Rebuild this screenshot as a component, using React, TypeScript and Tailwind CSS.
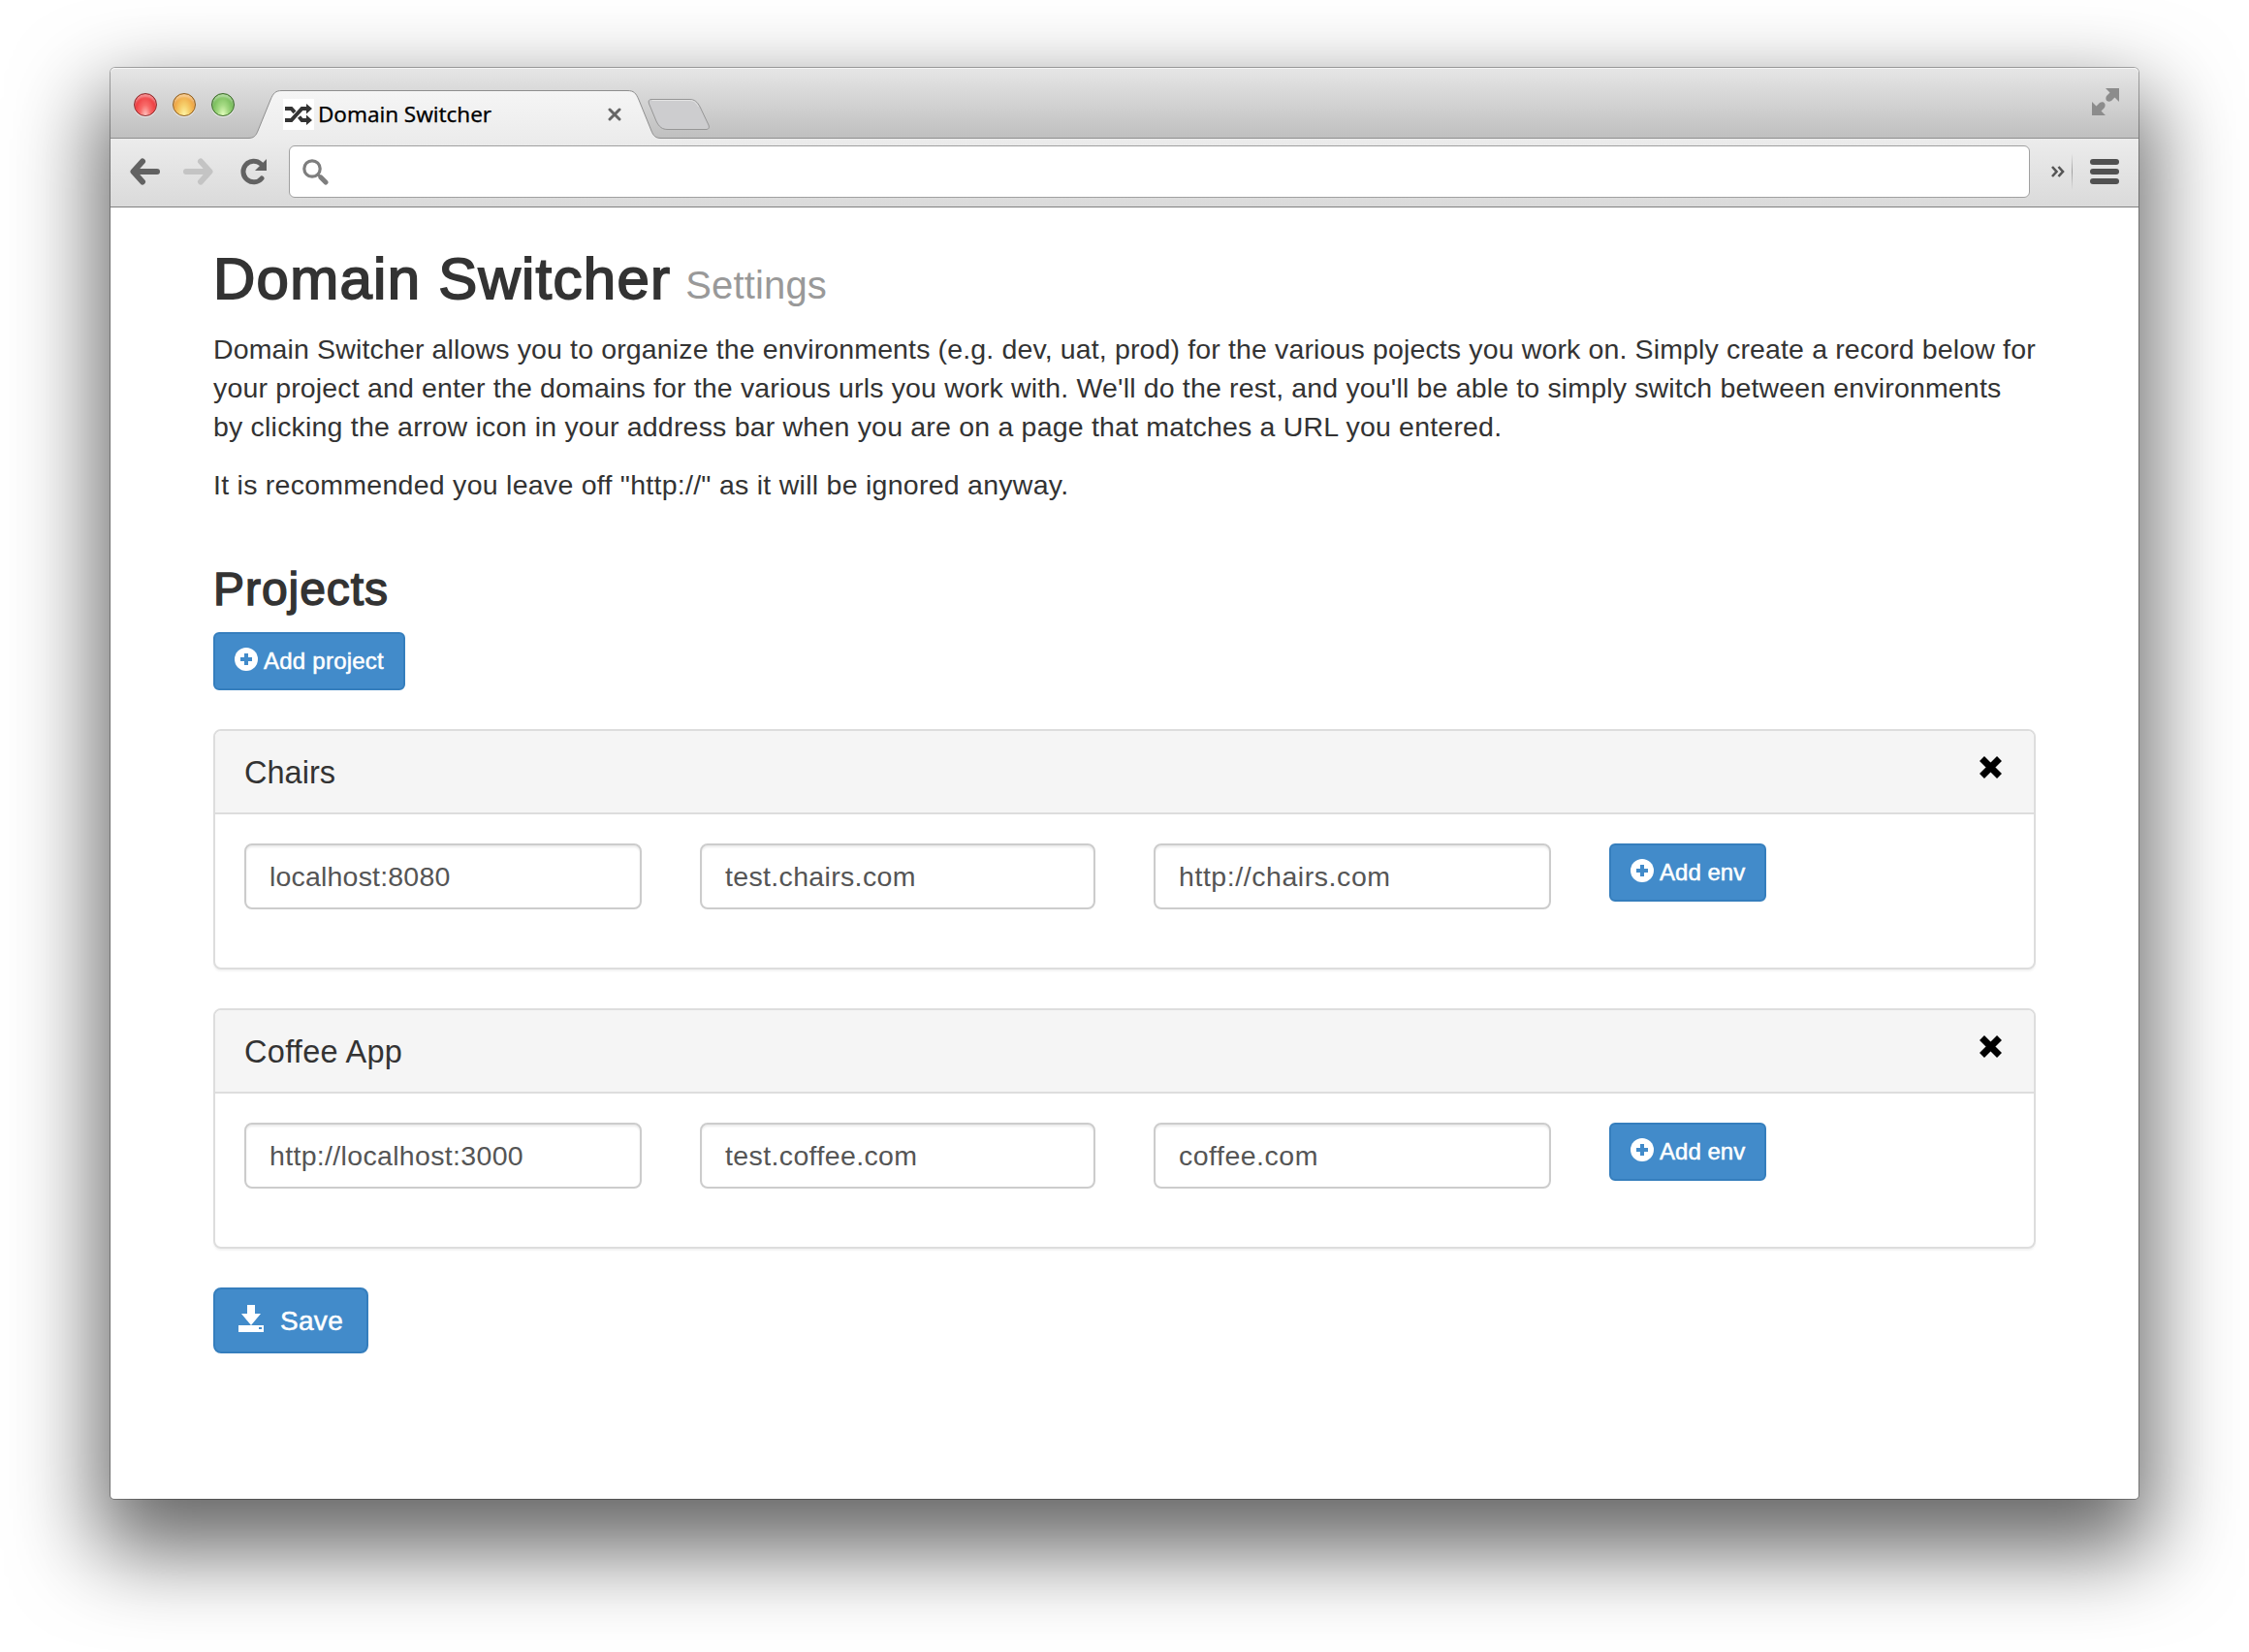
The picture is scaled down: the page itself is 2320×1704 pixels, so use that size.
const light = "size-6 rounded-full border-[1.5px]";

function TabStrip() {
  return (
    <div className="relative flex h-[73px] items-start rounded-t-[5px] bg-linear-to-b from-[#e6e6e6] to-[#bfbfbf] shadow-[inset_0_1px_0_#f4f4f4]">
      <div className="ml-6 mt-[26px] flex gap-4">
        <span className={light + " border-[#8e2f30] bg-[radial-gradient(ellipse_at_50%_100%,#ffc4c0_0%,#f86a68_35%,#ee3c40_70%,#b9151b_100%)] shadow-[inset_0_3px_2px_rgba(255,255,255,.4),0_1px_0_#eee]"} />
        <span className={light + " border-[#8f5f20] bg-[radial-gradient(ellipse_at_50%_100%,#fff6a8_0%,#f6cf6b_35%,#efa544_70%,#b46a10_100%)] shadow-[inset_0_3px_2px_rgba(255,255,255,.4),0_1px_0_#eee]"} />
        <span className={light + " border-[#3c6b28] bg-[radial-gradient(ellipse_at_50%_100%,#e6ffc0_0%,#a5da83_35%,#78bd5b_70%,#37791f_100%)] shadow-[inset_0_3px_2px_rgba(255,255,255,.4),0_1px_0_#eee]"} />
      </div>
      <svg className="absolute left-0 top-0" width="2092" height="74" viewBox="0 0 2092 74" fill="none">
        <defs>
          <linearGradient id="tab" x1="0" y1="24" x2="0" y2="74" gradientUnits="userSpaceOnUse">
            <stop stopColor="#f5f5f5" />
            <stop offset="1" stopColor="#ececec" />
          </linearGradient>
        </defs>
        <path d="M0 72.5H142C148 72.5 150 70 152 65L165 33C168 26 170 23.500 177 23.500H533C540 23.500 542 26 545 33L558 65C560 70 562 72.500 568 72.500H2092V74H0Z" fill="url(#tab)" />
        <path d="M0 72.5H142C148 72.5 150 70 152 65L165 33C168 26 170 23.500 177 23.500H533C540 23.500 542 26 545 33L558 65C560 70 562 72.500 568 72.500H2092" stroke="#8e8e8e" />
        <path d="M558 32.500H597C603 32.500 605 35 608 40L617 59C618 62 617 63.500 614 63.500H575C569 63.500 566 61 563 55L555.500 37C554.500 34 555.500 32.500 558 32.500Z" fill="#cdcdcf" stroke="#969696" />
        <path d="M558.500 33.500H597C602 33.500 604 36 606.500 40" stroke="#e4e4e4" />
      </svg>
      <div className="relative ml-[50px] mt-[32px] flex items-center">
        <span className="flex size-8 items-center justify-center bg-white">
          <svg width="28" height="22" viewBox="0 0 28 22" fill="none" stroke="#333" strokeWidth="4">
            <path d="M0 17H6.500L17.500 5H23" />
            <path d="M0 5H6.500L10 8.800M14.500 13.500L17.500 17H23" />
            <path d="M22 0L28 5L22 10.500ZM22 11.500L28 17L22 22Z" fill="#333" stroke="none" />
          </svg>
        </span>
        <span className="ml-1 whitespace-nowrap font-['Noto_Sans'] text-[22.500px] leading-8 tracking-[-0.06px] text-black [-webkit-text-stroke:0.250px_black]">Domain Switcher</span>
      </div>
      <svg className="absolute left-[513px] top-[41px]" width="14" height="14" viewBox="0 0 14 14" stroke="#666" strokeWidth="3" strokeLinecap="round">
        <path d="M2 2L12 12M12 2L2 12" />
      </svg>
      <svg className="ml-auto mr-[20px] mt-[21px]" width="28" height="28" viewBox="0 0 28 28" fill="#8c8c8c">
        <path d="M14 0H28V14L23.500 9.500L20 13C16 15 13 12 15 8L18.500 4.500Z" />
        <path d="M14 28H0V14L4.500 18.500L8 15C12 13 15 16 13 20L9.500 23.500Z" />
      </svg>
    </div>
  );
}

function Toolbar() {
  return (
    <div className="flex h-[71px] items-center border-b border-[#808080] bg-linear-to-b from-[#ececec] to-[#dadada] pb-[2px]">
      <svg className="ml-5" width="31" height="28" viewBox="0 0 31 28" fill="none" stroke="#626262" strokeWidth="6" strokeLinecap="round" strokeLinejoin="round">
        <path d="M28 14H5M13 3.500L3.500 14L13 24.500" />
      </svg>
      <svg className="ml-6" width="31" height="28" viewBox="0 0 31 28" fill="none" stroke="#c4c4c4" strokeWidth="6" strokeLinecap="round" strokeLinejoin="round">
        <path d="M3 14H26M18 3.500L27.500 14L18 24.500" />
      </svg>
      <svg className="ml-7" width="28" height="28" viewBox="0 0 28 28" fill="none">
        <path d="M22 21A10.800 10.800 0 1 1 21 6" stroke="#626262" strokeWidth="5" strokeLinecap="round" />
        <path d="M27 1V13H15Z" fill="#626262" />
      </svg>
      <div className="ml-[22px] flex h-[54px] w-[1796px] items-center rounded-[6px] border border-[#a0a0a0] bg-white pl-[13px]">
        <svg width="27" height="27" viewBox="0 0 27 27" fill="none" stroke="#7e7e7e" strokeLinecap="round">
          <circle cx="10" cy="10" r="8.200" strokeWidth="3.200" />
          <path d="M16 16L19 19" strokeWidth="3" />
          <path d="M19 19L24 24" strokeWidth="5" />
        </svg>
      </div>
      <svg className="ml-[22px]" width="14" height="12" viewBox="0 0 14 12" fill="none" stroke="#555" strokeWidth="2.600">
        <path d="M1 1L5.500 6L1 11M7.500 1L12 6L7.500 11" />
      </svg>
      <span className="ml-[7px] h-[38px] w-px bg-linear-to-b from-transparent via-[#a0a0a0] to-transparent" />
      <div className="ml-[18px] flex w-[30px] flex-col gap-1">
        <span className="h-1.5 rounded-full bg-[#505050]" />
        <span className="h-1.5 rounded-full bg-[#505050]" />
        <span className="h-1.5 rounded-full bg-[#505050]" />
      </div>
    </div>
  );
}

function PlusCircle() {
  return (
    <svg className="mt-[-4px]" width="24" height="24" viewBox="0 0 24 24">
      <circle cx="12" cy="12" r="12" fill="#fff" />
      <path d="M10 6H14V10H18V14H14V18H10V14H6V10H10Z" fill="#428bca" />
    </svg>
  );
}

function AddButton({ label, look }: { label: string; look: string }) {
  return (
    <button className={"flex h-[60px] items-center gap-1.5 rounded-[6px] border-2 border-[#357ebd] bg-[#428bca] pl-5 text-2xl text-white " + look}>
      <PlusCircle />
      <span className="whitespace-nowrap [-webkit-text-stroke:0.500px_white]">{label}</span>
    </button>
  );
}

type Env = { value: string; look: string };

function Project({ name, tracking, envs }: { name: string; tracking: string; envs: Env[] }) {
  return (
    <section className="mb-10 h-[248px] rounded-[8px] border-2 border-[#ddd] bg-white shadow-[0_2px_2px_rgba(0,0,0,0.05)]">
      <header className="flex h-[86px] justify-between rounded-t-[6px] border-b-2 border-[#ddd] bg-[#f5f5f5] pl-[30px] pr-[33px]">
        <h3 className={"text-[32.500px] leading-[86px] text-[#333] " + tracking}>{name}</h3>
        <svg className="mt-[26px]" width="23" height="23" viewBox="0 0 23 23" stroke="#000" strokeWidth="7">
          <path d="M2.500 2.500L20.500 20.500M20.500 2.500L2.500 20.500" />
        </svg>
      </header>
      <div className="flex items-start gap-[60px] pl-[30px] pt-[30px]">
        {envs.map((e) => (
          <div key={e.value} className={"flex h-[68px] items-center rounded-[8px] border-2 border-[#ccc] pl-6 text-[28.500px] text-[#555] shadow-[inset_0_2px_2px_rgba(0,0,0,0.075)] " + e.look}>
            {e.value}
          </div>
        ))}
        <AddButton label="Add env" look="w-[162px] tracking-[0.02px]" />
      </div>
    </section>
  );
}

export default function App() {
  return (
    <div className="flex h-[1704px] w-[2320px] justify-center overflow-hidden bg-white pt-[70px] font-['Liberation_Sans',sans-serif] text-[#333]">
      <div className="h-[1476px] w-[2092px] rounded-t-[5px] rounded-b-[4px] bg-white shadow-[0_0_0_1px_rgba(0,0,0,0.3),0_41px_88px_13px_rgba(0,0,0,0.6)]">
        <TabStrip />
        <Toolbar />
        <main className="flex flex-col px-[106px] pt-[41px]">
          <h1 className="flex h-[66px] items-baseline gap-[15px] text-[60px] leading-[66px]">
            <span className="whitespace-nowrap tracking-[1.25px] [-webkit-text-stroke:1.800px_#333]">Domain Switcher</span>
            <small className="text-[40px] tracking-[0.150px] text-[#999]">Settings</small>
          </h1>
          <p className="mt-[19px] flex flex-col items-start whitespace-nowrap text-[28.500px] leading-10">
            <span className="tracking-[0.140px]">Domain Switcher allows you to organize the environments (e.g. dev, uat, prod) for the various pojects you work on. Simply create a record below for</span>
            <span className="tracking-[0.160px]">your project and enter the domains for the various urls you work with. We'll do the rest, and you'll be able to simply switch between environments</span>
            <span className="tracking-[0.200px]">by clicking the arrow icon in your address bar when you are on a page that matches a URL you entered.</span>
          </p>
          <p className="mt-5 text-[28.500px] leading-10 tracking-[0.265px]">It is recommended you leave off "http://" as it will be ignored anyway.</p>
          <h2 className="mt-[61px] text-[48px] leading-[53px] tracking-[0.951px] [-webkit-text-stroke:1.500px_#333]">Projects</h2>
          <div className="mb-10 mt-[18px]">
            <AddButton label="Add project" look="w-[198px] tracking-[0.236px]" />
          </div>
          <Project
            name="Chairs"
            tracking="tracking-[0.030px]"
            envs={[
              { value: "localhost:8080", look: "w-[410px] tracking-[0.190px]" },
              { value: "test.chairs.com", look: "w-[408px] tracking-[0.340px]" },
              { value: "http://chairs.com", look: "w-[410px] tracking-[0.560px]" },
            ]}
          />
          <Project
            name="Coffee App"
            tracking="tracking-[0.290px]"
            envs={[
              { value: "http://localhost:3000", look: "w-[410px] tracking-[0.330px]" },
              { value: "test.coffee.com", look: "w-[408px] tracking-[0.380px]" },
              { value: "coffee.com", look: "w-[410px] tracking-[0.500px]" },
            ]}
          />
          <button className="flex h-[68px] w-[160px] items-center rounded-[8px] border-2 border-[#357ebd] bg-[#428bca] pl-6 text-[28px] text-white">
            <svg className="mt-[-4px]" width="26" height="28" viewBox="0 0 26 28" fill="#fff">
              <path d="M9 0H17V9H23L13 21L3 9H9Z" />
              <path fillRule="evenodd" d="M0 21H26V28H0ZM21 23V25H24V23Z" />
            </svg>
            <span className="ml-[17px] pt-0.5 tracking-[0.293px] [-webkit-text-stroke:0.500px_white]">Save</span>
          </button>
        </main>
      </div>
    </div>
  );
}
